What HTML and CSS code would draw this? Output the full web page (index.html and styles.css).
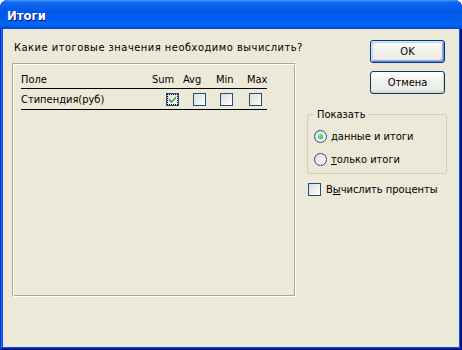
FILE: index.html
```html
<!DOCTYPE html>
<html lang="ru">
	<head>
		<meta charset="utf-8" />
		<link rel="stylesheet" href="styles.css">
	</head>
	<body>
		<div class="window">
			<div class="titlebar">
				<span class="title">Итоги</span>
			</div>
			<div class="client">
				<div class="main">
					<p class="prompt">Какие итоговые значения необходимо вычислить?</p>
					<div class="panel">
						<div class="row head">
							<span class="field">Поле</span>
							<span class="col c-sum">Sum</span>
							<span class="col c-avg">Avg</span>
							<span class="col c-min">Min</span>
							<span class="col c-max">Max</span>
						</div>
						<div class="row">
							<span class="field">Стипендия(руб)</span>
							<span class="col c-sum">
								<span class="box checked focus">
									<svg class="tick" viewBox="0 0 7 7"><path d="M0 2.5l2.5 2.5 4.5-4.5v2l-4.5 4.5-2.5-2.5z"/></svg>
								</span>
							</span>
							<span class="col c-avg"><span class="box"></span></span>
							<span class="col c-min"><span class="box"></span></span>
							<span class="col c-max"><span class="box"></span></span>
						</div>
					</div>
				</div>
				<div class="side">
					<button type="button" class="btn default">OK</button>
					<button type="button" class="btn">Отмена</button>
					<fieldset class="group">
						<legend>Показать</legend>
						<label class="option">
							<span class="radio on"></span>
							<span><u>д</u>анные и итоги</span>
						</label>
						<label class="option">
							<span class="radio"></span>
							<span><u>т</u>олько итоги</span>
						</label>
					</fieldset>
					<label class="option check">
						<span class="box"></span>
						<span>В<u>ы</u>числить проценты</span>
					</label>
				</div>
			</div>
		</div>
	</body>
</html>
```

FILE: styles.css
```css
html, body {
	margin: 0;
	padding: 0;
	background: #ffffff;
}

body {
	font-family: "DejaVu Sans Condensed", "DejaVu Sans", sans-serif;
	font-size: 11px;
	line-height: 13px;
	color: #000000;
}

.window {
	display: flex;
	flex-direction: column;
	width: 462px;
	height: 350px;
	box-sizing: border-box;
	padding: 0 3px 3px;
	background: #0855dd;
	border-radius: 8px 8px 0 0;
	box-shadow: inset -1px -1px #00138c, inset 1px 1px #0831d9, inset -2px -2px #001ea0, inset 2px 2px #166aee;
}

.titlebar {
	display: flex;
	align-items: center;
	height: 29px;
	margin: 0 -3px;
	padding: 0 7px;
	border-radius: 8px 8px 0 0;
	background: linear-gradient(180deg, #4a9cff 0, #1167f0 8%, #0058e6 40%, #0063f5 85%, #0052e0 95%, #003dd0 100%);
}

.title {
	color: #ffffff;
	font-weight: bold;
	font-size: 13px;
	text-shadow: 1px 1px #0f1089;
	padding-top: 2px;
}

.client {
	flex: 1;
	display: flex;
	gap: 11px;
	padding: 0 12px 0 9px;
	background: #ece9d8;
}

.main {
	width: 284px;
}

.prompt {
	margin: 12px 0 9px 2px;
	white-space: nowrap;
	letter-spacing: 0.5px;
}

.panel {
	height: 234px;
	box-sizing: border-box;
	border: 1px solid;
	border-color: #aca899 #ffffff #ffffff #aca899;
	box-shadow: inset 1px 1px #ffffff, inset -1px -1px #aca899;
	padding: 1px 8px;
}

.row {
	display: grid;
	grid-template-columns: 131px 31px 33px 31px 20px;
	width: 246px;
	border-bottom: 1px solid #000000;
	white-space: nowrap;
}

.row.head {
	height: 23px;
	align-items: end;
}

.row.head span {
	padding-bottom: 2px;
}

.row:not(.head) {
	height: 20px;
	align-items: center;
}

.c-sum .box { margin-left: 14px; }
.c-avg .box { margin-left: 10px; }
.c-min .box { margin-left: 4px; }
.c-max .box { margin-left: 2px; }

.box {
	display: block;
	position: relative;
	width: 13px;
	height: 13px;
	box-sizing: border-box;
	border: 1px solid #1c5180;
	background: linear-gradient(135deg, #dcdcd7 0, #f7f7f5 80%, #ffffff 100%);
}

.box.focus {
	outline: 1px dotted #000000;
	outline-offset: -2px;
}

.tick {
	position: absolute;
	left: 2px;
	top: 2px;
	width: 7px;
	height: 7px;
	fill: #21a121;
}

.side {
	width: 140px;
	display: flex;
	flex-direction: column;
	align-items: flex-start;
	white-space: nowrap;
}

.btn {
	width: 75px;
	height: 23px;
	margin-left: 63px;
	padding: 0;
	font: inherit;
	color: #000000;
	border: 1px solid #003c74;
	border-radius: 3px;
	background: linear-gradient(180deg, #ffffff 0, #f3f3ee 40%, #ecebe6 85%, #d6d0c5 100%);
	box-shadow: inset -1px -1px #d6d0c5;
}

.btn.default {
	margin-top: 11px;
	margin-bottom: 8px;
	box-shadow: inset 1px 1px #cee7ff, inset -1px -1px #6982ee, inset 2px 2px #bcd4f6, inset -2px -2px #89ade4;
}

.group {
	width: 140px;
	box-sizing: border-box;
	margin: 14px 0 0;
	padding: 0 6px 7px;
	border: 1px solid #d0d0bf;
	border-radius: 3px;
}

.group legend {
	padding: 0 3px;
	color: #000000;
}

.option {
	display: flex;
	align-items: center;
	gap: 4px;
	height: 13px;
}

.group .option {
	margin-top: 9px;
}

.group .option + .option {
	margin-top: 10px;
}

.radio {
	width: 13px;
	height: 13px;
	box-sizing: border-box;
	border: 1px solid #1c5180;
	border-radius: 50%;
	background: linear-gradient(135deg, #dcdcd7 0, #f7f7f5 80%, #ffffff 100%);
	display: flex;
	align-items: center;
	justify-content: center;
}

.radio.on::after {
	content: "";
	width: 5px;
	height: 5px;
	border-radius: 50%;
	background: radial-gradient(circle at 35% 35%, #a0eca0 0, #55d551 40%, #21a121 100%);
}

.option.check {
	margin: 9px 0 0 1px;
	gap: 5px;
}
```
